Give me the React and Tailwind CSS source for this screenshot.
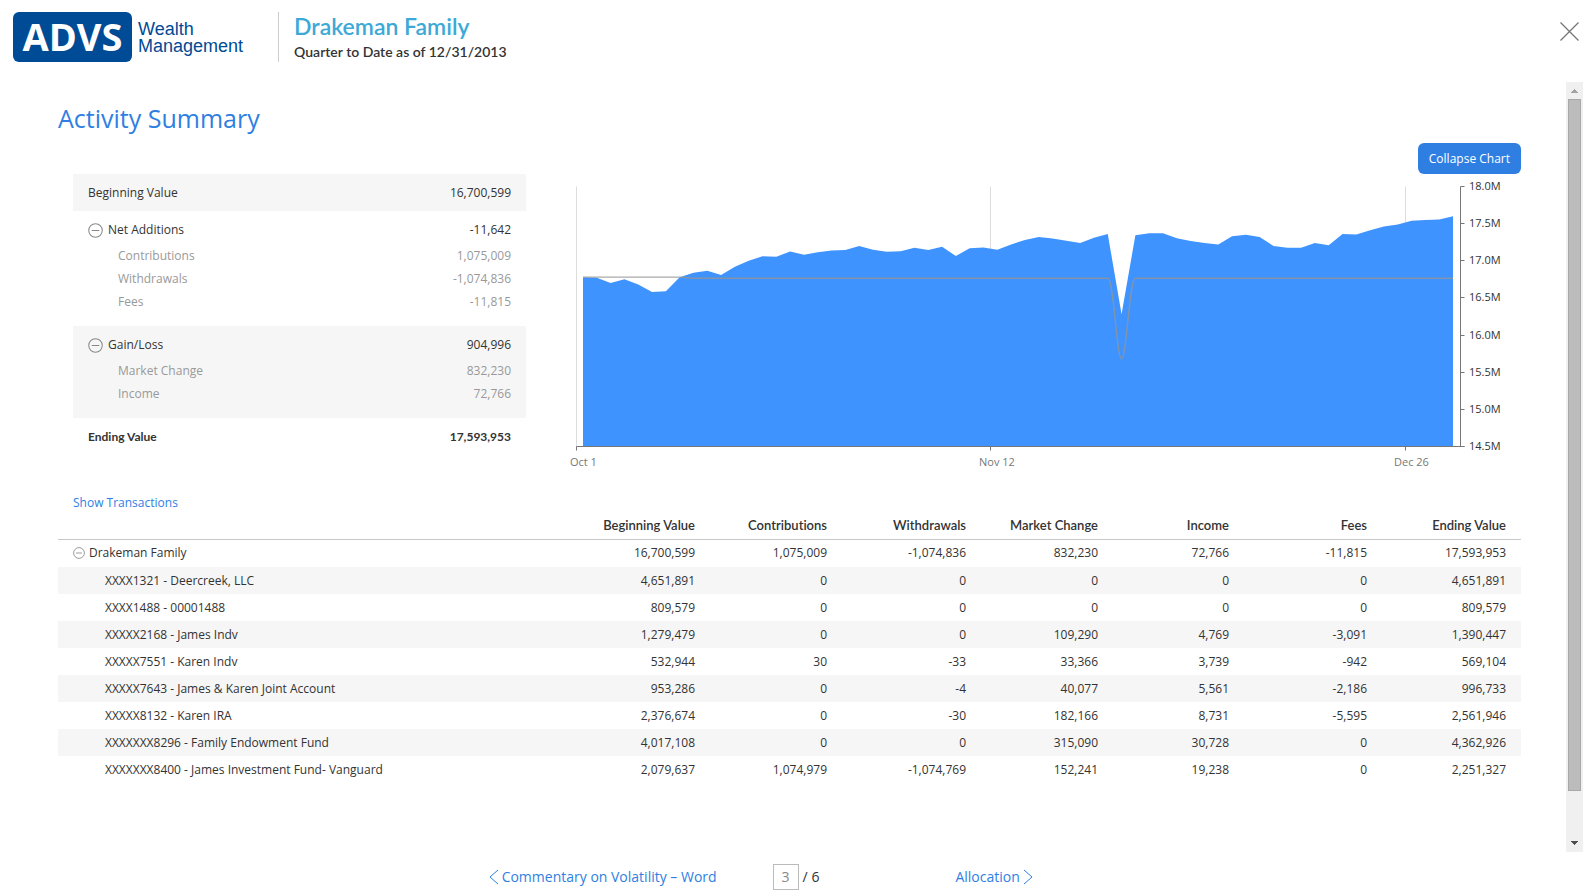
import React, { useState } from 'react';

const columns = ['Beginning Value', 'Contributions', 'Withdrawals', 'Market Change', 'Income', 'Fees', 'Ending Value'];

const family = {
  name: 'Drakeman Family',
  values: ['16,700,599', '1,075,009', '-1,074,836', '832,230', '72,766', '-11,815', '17,593,953'],
};

const accounts = [
  { name: 'XXXX1321 - Deercreek, LLC', values: ['4,651,891', '0', '0', '0', '0', '0', '4,651,891'] },
  { name: 'XXXX1488 - 00001488', values: ['809,579', '0', '0', '0', '0', '0', '809,579'] },
  { name: 'XXXXX2168 - James Indv', values: ['1,279,479', '0', '0', '109,290', '4,769', '-3,091', '1,390,447'] },
  { name: 'XXXXX7551 - Karen Indv', values: ['532,944', '30', '-33', '33,366', '3,739', '-942', '569,104'] },
  { name: 'XXXXX7643 - James & Karen Joint Account', values: ['953,286', '0', '-4', '40,077', '5,561', '-2,186', '996,733'] },
  { name: 'XXXXX8132 - Karen IRA', values: ['2,376,674', '0', '-30', '182,166', '8,731', '-5,595', '2,561,946'] },
  { name: 'XXXXXXX8296 - Family Endowment Fund', values: ['4,017,108', '0', '0', '315,090', '30,728', '0', '4,362,926'] },
  { name: 'XXXXXXX8400 - James Investment Fund- Vanguard', values: ['2,079,637', '1,074,979', '-1,074,769', '152,241', '19,238', '0', '2,251,327'] },
];

// portfolio value in millions, one point per trading day
const history = [
  16.78, 16.77, 16.7, 16.75, 16.68, 16.58, 16.59, 16.78, 16.84, 16.865, 16.81, 16.92, 17.0,
  17.06, 17.055, 17.125, 17.08, 17.115, 17.14, 17.145, 17.2, 17.15, 17.12, 17.13, 17.175,
  17.145, 17.19, 17.065, 17.17, 17.18, 17.15, 17.22, 17.28, 17.32, 17.3, 17.27, 17.24, 17.31,
  17.36, 16.28, 17.345, 17.37, 17.37, 17.305, 17.265, 17.24, 17.22, 17.33, 17.35, 17.32, 17.2,
  17.175, 17.175, 17.24, 17.21, 17.36, 17.355, 17.41, 17.46, 17.49, 17.54, 17.55, 17.555, 17.6,
];

const ticks = ['18.0', '17.5', '17.0', '16.5', '16.0', '15.5', '15.0', '14.5'];
const dates = [
  { label: 'Oct 1', x: 8.5, textX: 2 },
  { label: 'Nov 12', x: 422.5, textX: 411 },
  { label: 'Dec 26', x: 837.5, textX: 826 },
];

const top = 8.5;
const bottom = 268.5;
const px = i => 15 + i * (870 / 63);
const py = value => top + ((18 - value) / 3.5) * (bottom - top);

function MinusCircle({ className }) {
  return (
    <svg viewBox="0 0 16 16" className={className} fill="none" stroke="#888" strokeWidth="1.1">
      <circle cx="8" cy="8" r="7.2" />
      <path d="M4 8h8" />
    </svg>
  );
}

function Logo() {
  return (
    <div className="flex items-center gap-1.5">
      <div className="flex h-[50px] w-[119px] items-center justify-center rounded-md bg-[#004b95] pb-0.5 font-['Open_Sans',sans-serif] text-[38px] leading-none font-bold text-white">
        ADVS
      </div>
      <div className="pt-0.5 font-['Liberation_Sans',Arial,sans-serif] text-[18px] leading-[17px] text-[#004b95]">
        Wealth
        <br />
        Management
      </div>
    </div>
  );
}

function SummaryGroup({ title, value, rows, className }) {
  const [open, setOpen] = useState(true);
  return (
    <div className={'px-[15px] pt-2 pb-[13px] ' + className}>
      <div className="mb-[3px] flex h-[22px] items-center justify-between">
        <button type="button" className="flex items-center gap-[5px]" aria-expanded={open} onClick={() => setOpen(!open)}>
          <MinusCircle className="size-[15px]" />
          {title}
        </button>
        <span>{value}</span>
      </div>
      {open && rows.map(([label, amount]) => (
        <div key={label} className="flex h-[23px] items-center justify-between pl-[30px] text-[#999]">
          <span>{label}</span>
          <span>{amount}</span>
        </div>
      ))}
    </div>
  );
}

function Summary() {
  return (
    <div className="w-[453px] shrink-0">
      <div className="flex h-[37px] items-center justify-between bg-[#f6f6f6] px-[15px]">
        <span>Beginning Value</span>
        <span>16,700,599</span>
      </div>
      <SummaryGroup
        title="Net Additions"
        value="-11,642"
        rows={[['Contributions', '1,075,009'], ['Withdrawals', '-1,074,836'], ['Fees', '-11,815']]}
        className="bg-white"
      />
      <SummaryGroup
        title="Gain/Loss"
        value="904,996"
        rows={[['Market Change', '832,230'], ['Income', '72,766']]}
        className="bg-[#f6f6f6]"
      />
      <div className="flex h-[37px] items-center justify-between px-[15px] font-['Lato',sans-serif] text-[12px] font-bold">
        <span>Ending Value</span>
        <span>17,593,953</span>
      </div>
    </div>
  );
}

function Chart() {
  const line = history.map((value, i) => `${px(i)},${py(value)}`).join(' L');
  const base = py(16.765);
  return (
    <svg viewBox="0 0 953 294" className="w-full" role="img" aria-label="Portfolio value">
      <g stroke="#ddd">
        {dates.map(d => <path key={d.label} d={`M${d.x} ${top}V${bottom}`} />)}
      </g>
      <path d={`M${px(0)},${bottom} L${line} L${px(63)},${bottom}Z`} fill="#3f93ff" />
      <path
        d={`M${px(0)} ${py(16.78)}H${px(7)}L${px(8)} ${base}H${px(38)}C${px(38) + 6} ${base} ${px(39) - 5} ${py(15.68)} ${px(39)} ${py(15.68)}S${px(40) - 6} ${base} ${px(40)} ${base}H${px(63)}`}
        fill="none"
        stroke="#959595"
        strokeOpacity="0.8"
        strokeWidth="1.3"
      />
      <g fill="none" stroke="#777">
        <path d={`M8.5 ${bottom + 4}V${bottom}H896.5`} />
        <path d={`M422.5 ${bottom}v4M837.5 ${bottom}v4`} />
        <path d={`M892.5 ${top}V${bottom}`} />
        {ticks.map(t => <path key={t} d={`M892.5 ${Math.floor(py(Number(t))) + 0.5}h4`} />)}
      </g>
      <g className="text-[11px]" fill="#333">
        {ticks.map(t => <text key={t} x="901" y={Math.floor(py(Number(t))) + 4}>{t}M</text>)}
      </g>
      <g className="text-[11px]" fill="#777">
        {dates.map(d => <text key={d.label} x={d.textX} y="288">{d.label}</text>)}
      </g>
    </svg>
  );
}

function AccountsTable() {
  return (
    <table className="w-full table-fixed border-collapse">
      <colgroup>
        <col />
        <col className="w-[132px]" />
        <col className="w-[132px]" />
        <col className="w-[139px]" />
        <col className="w-[132px]" />
        <col className="w-[131px]" />
        <col className="w-[138px]" />
        <col className="w-[139px]" />
      </colgroup>
      <thead>
        <tr className="h-7 border-b border-[#c8c8c8] font-['Lato',sans-serif] text-[13px]">
          <td />
          {columns.map(c => (
            <th key={c} scope="col" className="pr-[15px] text-right font-semibold whitespace-nowrap">{c}</th>
          ))}
        </tr>
      </thead>
      <tbody>
        <tr className="h-7">
          <th scope="row" className="pl-[15px] text-left font-normal">
            <button type="button" className="flex items-center gap-1">
              <MinusCircle className="size-3" />
              {family.name}
            </button>
          </th>
          {family.values.map((v, i) => <td key={i} className="pr-[15px] text-right">{v}</td>)}
        </tr>
        {accounts.map(a => (
          <tr key={a.name} className="h-[27px] odd:bg-white even:bg-[#f6f6f6]">
            <th scope="row" className="pl-[47px] text-left font-normal whitespace-nowrap">{a.name}</th>
            {a.values.map((v, i) => <td key={i} className="pr-[15px] text-right">{v}</td>)}
          </tr>
        ))}
      </tbody>
    </table>
  );
}

function ScrollBar() {
  return (
    <div className="flex w-[17px] shrink-0 flex-col bg-[#f0f0f0]" aria-hidden="true">
      <svg viewBox="0 0 17 17" className="size-[17px]" fill="#a3a3a3">
        <path d="M8 7h1v1h1v1h1v1h1v1H5v-1h1V9h1V8h1z" />
      </svg>
      <div className="min-h-0 flex-1 px-0.5">
        <div className="h-[94%] border border-[#a8a8a8] bg-[#bcbcbc]" />
      </div>
      <svg viewBox="0 0 17 17" className="size-[17px]" fill="#505050">
        <path d="M5 6h7v1h-1v1h-1v1H9v1H8V9H7V8H6V7H5z" />
      </svg>
    </div>
  );
}

export default function App() {
  const [showChart, setShowChart] = useState(true);
  const [page, setPage] = useState('3');

  return (
    <div className="flex h-screen flex-col bg-white font-['Open_Sans',sans-serif] text-[12px] leading-4 text-[#333] [font-variant-ligatures:none]">
      <header className="flex h-[82px] shrink-0 items-start pt-3 pr-[13px] pl-[13px]">
        <Logo />
        <div className="ml-[35px] h-[50px] border-l border-[#ccc] pl-[15px] font-['Lato',sans-serif]">
          <h1 className="text-[23px] leading-7 font-semibold text-[#3da9d6]">Drakeman Family</h1>
          <p className="text-[14px] leading-6 font-semibold">Quarter to Date as of 12/31/2013</p>
        </div>
        <button type="button" aria-label="Close" className="mt-[10px] ml-auto">
          <svg viewBox="0 0 19 19" className="size-[19px]" stroke="#777" strokeWidth="1.3">
            <path d="M.5.5l18 18M18.5.5l-18 18" />
          </svg>
        </button>
      </header>

      <div className="flex min-h-0 flex-1 pr-[9px]">
        <main className="min-w-0 flex-1 overflow-hidden pt-5 pr-[45px] pl-[58px]">
          <h2 className="text-[25px] leading-8 text-[#2f7fe3]">Activity Summary</h2>
          <div className="mt-[9px] flex justify-end">
            <button
              type="button"
              className="h-[31px] rounded-md bg-[#2f7fe3] px-[11px] text-[12px] text-white"
              onClick={() => setShowChart(!showChart)}
            >
              {showChart ? 'Collapse Chart' : 'Expand Chart'}
            </button>
          </div>
          <div className="flex gap-[42px] pl-[15px]">
            <Summary />
            <div className="min-w-0 flex-1 pt-1">{showChart && <Chart />}</div>
          </div>
          <div className="mt-[23px] pl-[15px]">
            <a href="#transactions" className="text-[#2f7fe3]">Show Transactions</a>
          </div>
          <AccountsTable />
        </main>
        <ScrollBar />
      </div>

      <footer className="grid h-[43px] shrink-0 grid-cols-[1fr_auto_1fr] items-center pt-1.5 text-[14px]">
        <a href="#commentary" className="mr-14 flex items-center gap-[3px] justify-self-end text-[#2f7fe3]">
          <svg viewBox="0 0 10 16" className="h-4 w-2.5" fill="none" stroke="currentColor">
            <path d="M9 1L1 8l8 7" />
          </svg>
          Commentary on Volatility – Word
        </a>
        <div className="flex items-center gap-1">
          <input
            aria-label="Page"
            value={page}
            onChange={e => setPage(e.target.value)}
            className="h-[26px] w-[26px] border border-[#bbb] text-center text-[#888]"
          />
          <span>/ 6</span>
        </div>
        <a href="#allocation" className="ml-[136px] flex items-center gap-[3px] justify-self-start text-[#2f7fe3]">
          Allocation
          <svg viewBox="0 0 10 16" className="h-4 w-2.5" fill="none" stroke="currentColor">
            <path d="M1 1l8 7-8 7" />
          </svg>
        </a>
      </footer>
    </div>
  );
}
